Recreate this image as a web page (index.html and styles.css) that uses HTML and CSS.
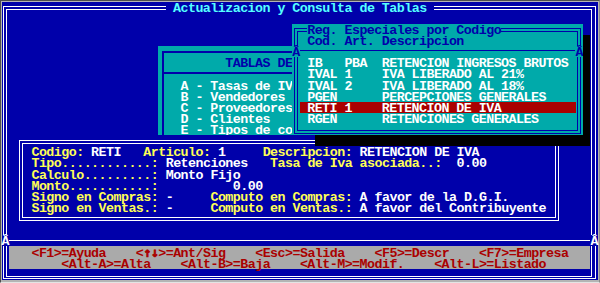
FILE: index.html
```html
<!DOCTYPE html>
<html lang="es">
<head>
<meta charset="utf-8">
<title>Actualizacion y Consulta de Tablas</title>
<link rel="stylesheet" href="styles.css">
</head>
<body>
<div class="frame">
  <main class="screen">
    <h1 class="title cell"> Actualizacion y Consulta de Tablas </h1>

    <section class="w-tab">
      <div class="txt">
        <div class="ln"></div>
        <div class="ln t-blue">         TABLAS DE</div>
        <div class="ln"></div>
        <div class="ln">   A - Tasas de IV</div>
        <div class="ln">   B - Vendedores</div>
        <div class="ln">   C - Proveedores</div>
        <div class="ln">   D - Clientes</div>
        <div class="ln">   E - Tipos de co</div>
      </div>
    </section>

    <section class="w-det">
      <div class="txt">
        <div class="ln"></div>
        <div class="ln">  <span class="y">Codigo:</span> RETI   <span class="y">Articulo:</span> 1     <span class="y">Descripcion:</span> RETENCION DE IVA</div>
        <div class="ln">  <span class="y">Tipo............:</span> Retenciones   <span class="y">Tasa de Iva asociada..:</span>  0.00</div>
        <div class="ln">  <span class="y">Calculo.........:</span> Monto Fijo</div>
        <div class="ln">  <span class="y">Monto...........:</span>          0.00</div>
        <div class="ln">  <span class="y">Signo en Compras:</span> -     <span class="y">Computo en Compras:</span> A favor de la D.G.I.</div>
        <div class="ln">  <span class="y">Signo en Ventas.:</span> -     <span class="y">Computo en Ventas.:</span> A favor del Contribuyente</div>
      </div>
    </section>

    <section class="w-pop">
      <div class="pop-title cell">Reg. Especiales por Codigo</div>
      <div class="pop-jn pop-jn-l cell">Â</div>
      <div class="pop-jn pop-jn-r cell">Â</div>
      <div class="pop-rule"></div>
      <div class="txt">
        <div class="ln"></div>
        <div class="ln t-blue">  Cod. Art. Descripcion</div>
        <div class="ln"></div>
        <div class="ln">  IB   PBA  RETENCION INGRESOS BRUTOS</div>
        <div class="ln">  IVAL 1    IVA LIBERADO AL 21%</div>
        <div class="ln">  IVAL 2    IVA LIBERADO AL 18%</div>
        <div class="ln">  PGEN      PERCEPCIONES GENERALES</div>
        <div class="ln hl"> RETI 1    RETENCION DE IVA</div>
        <div class="ln">  RGEN      RETENCIONES GENERALES</div>
      </div>
    </section>

    <div class="shadow sh-r"></div>
    <div class="shadow sh-b"></div>

    <div class="jn jn-l cell">Â</div>
    <div class="jn jn-r cell">Â</div>
    <div class="rule"></div>

    <footer class="status">
      <div class="ln">   &lt;F1&gt;=Ayuda    &lt;<span class="arw">↑↓</span>&gt;=Ant/Sig    &lt;Esc&gt;=Salida    &lt;F5&gt;=Descr    &lt;F7&gt;=Empresa</div>
      <div class="ln">       &lt;Alt-A&gt;=Alta    &lt;Alt-B&gt;=Baja    &lt;Alt-M&gt;=Modif.    &lt;Alt-L&gt;=Listado</div>
    </footer>
  </main>
</div>
</body>
</html>
```

FILE: styles.css
```css
:root {
  --cw: 7.46px;
  --ch: 11.14px;
  --blue: #0000aa;
  --cyan: #00aaaa;
}

html, body {
  margin: 0;
  padding: 0;
}

body {
  width: 600px;
  height: 283px;
  overflow: hidden;
  background: #b4b4b4;
}

.frame {
  box-sizing: border-box;
  width: 600px;
  height: 283px;
  border-style: solid;
  border-width: 1px;
  border-color: #4e4e4e #8c8c8c #e4e4e4 #4e4e4e;
  background: #b4b4b4;
  padding: 0.7px 0 0 0.6px;
}

.screen {
  display: grid;
  grid-template-columns: repeat(80, var(--cw));
  grid-template-rows: repeat(25, var(--ch));
  width: calc(80 * var(--cw));
  height: calc(25 * var(--ch));
  background: var(--blue);
  color: #ffffff;
  font-family: "Liberation Mono", "DejaVu Sans Mono", monospace;
  font-weight: bold;
  font-size: 13.33px;
  line-height: var(--ch);
  letter-spacing: -0.54px;
  isolation: isolate;
}

/* generic text rows */
.ln,
.cell {
  box-sizing: border-box;
  height: var(--ch);
  padding-top: 1px;
  white-space: pre;
}

.txt {
  grid-area: 1 / 1 / -1 / -1;
}

.t-blue { color: var(--blue); }
.y { color: #ffff55; }

.arw {
  font-family: "DejaVu Sans Mono", monospace;
  letter-spacing: -0.57px;
  -webkit-text-stroke: 0.7px #aa0000;
}

/* frame lines drawn by pseudo grid items */
.screen::before, .screen::after,
.w-tab::before, .w-tab::after,
.w-det::before, .w-det::after,
.w-pop::before, .w-pop::after {
  content: "";
  box-sizing: border-box;
  z-index: 0;
}

.screen::before {
  grid-area: 1 / 1 / -1 / -1;
  margin: 4.3px 1.9px 0.5px 1.4px;
  border: 1px solid #ffffff;
}

.screen::after {
  grid-area: 1 / 1 / -1 / -1;
  margin: 7px 5.4px 3.2px 4.9px;
  border: 1px solid #ffffff;
}

/* main title on the top border */
.title {
  grid-area: 1 / 23 / 2 / 59;
  margin: 0;
  font: inherit;
  color: #55ffff;
  background: var(--blue);
  z-index: 1;
}

/* TABLAS window */
.w-tab {
  grid-area: 5 / 22 / 14 / 50;
  display: grid;
  grid-template-columns: repeat(28, var(--cw));
  grid-template-rows: repeat(9, var(--ch));
  background: var(--cyan);
  z-index: 1;
}

.w-tab::before {
  grid-area: 1 / 1 / -1 / -1;
  margin: 4.4px 0 0 3.5px;
  border-left: 2px solid var(--blue);
  border-top: 2px solid var(--blue);
}

.w-tab::after {
  grid-area: 3 / 1 / 4 / -1;
  align-self: start;
  margin: 3.7px 0 0 3.5px;
  border-top: 2px solid var(--blue);
}

/* detail window */
.w-det {
  grid-area: 13 / 3 / 21 / 76;
  display: grid;
  grid-template-columns: repeat(73, var(--cw));
  grid-template-rows: repeat(8, var(--ch));
  background: var(--blue);
  z-index: 2;
}

.w-det::before {
  grid-area: 1 / 1 / -1 / -1;
  margin: 5.3px 1.1px 3.5px 2.5px;
  border: 1px solid #ffffff;
}

.w-det::after {
  grid-area: 1 / 1 / -1 / -1;
  margin: 7.9px 4.4px 6.2px 5.5px;
  border: 1px solid #ffffff;
}

/* popup list window */
.w-pop {
  grid-area: 3 / 40 / 13 / 79;
  display: grid;
  grid-template-columns: repeat(39, var(--cw));
  grid-template-rows: repeat(10, var(--ch));
  background: var(--cyan);
  z-index: 3;
}

.w-pop::before {
  grid-area: 1 / 1 / -1 / -1;
  margin: 4px 1.5px 1.7px 1.5px;
  border: 1px solid var(--blue);
}

.w-pop::after {
  grid-area: 1 / 1 / -1 / -1;
  margin: 7px 4.5px 4.7px 4.5px;
  border: 1px solid var(--blue);
}

.pop-title {
  grid-area: 1 / 3 / 2 / 29;
  background: var(--cyan);
  color: var(--blue);
  z-index: 1;
}

.pop-jn {
  grid-row: 3;
  background: var(--cyan);
  color: var(--blue);
  z-index: 1;
}

.pop-jn-l { grid-column: 1; }
.pop-jn-r { grid-column: 39; }

.pop-rule {
  grid-area: 3 / 2 / 4 / 39;
  align-self: start;
  margin-top: 3.5px;
  border-top: 1px solid var(--blue);
}

.hl {
  margin-left: var(--cw);
  width: calc(37 * var(--cw));
  background: #aa0000;
}

/* popup shadow */
.shadow {
  background: #000000;
  z-index: 4;
}

.sh-r { grid-area: 4 / 79 / 14 / 80; }
.sh-b { grid-area: 13 / 43 / 14 / 79; }

/* divider above status bar */
.jn {
  grid-row: 22;
  background: var(--blue);
  color: #ffffff;
  z-index: 1;
}

.jn-l { grid-column: 1; }
.jn-r { grid-column: 80; }

.rule {
  grid-area: 22 / 2 / 23 / 80;
  align-self: start;
  margin-top: 5.1px;
  border-top: 1px solid #ffffff;
  z-index: 1;
}

/* key help bar */
.status {
  grid-area: 23 / 2 / 25 / 80;
  background: #aaaaaa;
  color: #aa0000;
  z-index: 1;
}
```
